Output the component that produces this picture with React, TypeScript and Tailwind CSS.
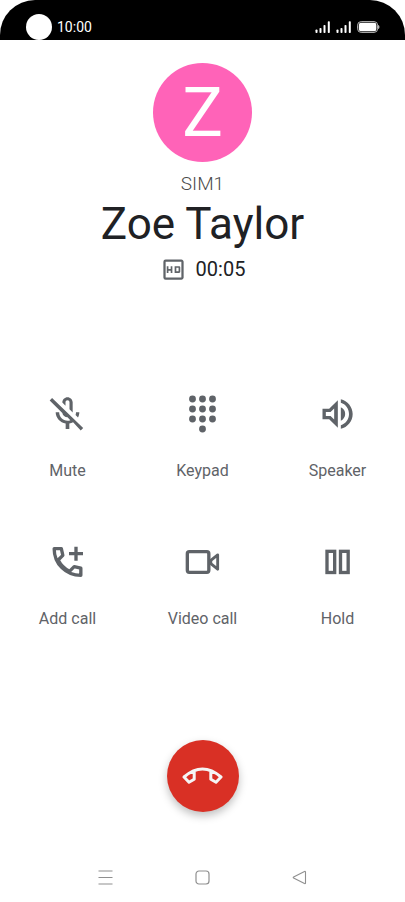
import React from 'react';
import { MdOutlineHd } from 'react-icons/md';

const SignalIcon: React.FC = () => (
  <svg className="w-4 h-3" viewBox="0 0 16 12" fill="#fff" aria-hidden="true">
    <rect x="0.5" y="8.5" width="2" height="3.5" rx="0.8" />
    <rect x="4.5" y="7" width="2" height="5" rx="0.8" />
    <rect x="8.5" y="4" width="2" height="8" rx="0.8" />
    <rect x="12.8" y="0.3" width="2" height="11.7" rx="0.8" />
  </svg>
);

const BatteryIcon: React.FC = () => (
  <svg className="w-[23px] h-3" viewBox="0 0 23 12" aria-hidden="true">
    <rect x="0.6" y="0.6" width="20" height="10.8" rx="3.6" fill="none" stroke="#bbb" strokeWidth="1" />
    <rect x="1.8" y="1.8" width="17.6" height="8.4" rx="2.2" fill="#fff" />
    <path d="M21.2 4c.9.3 1.2 1.1 1.2 2s-.3 1.7-1.2 2z" fill="#ddd" />
  </svg>
);

const MuteIcon: React.FC = () => (
  <svg className="w-[41px] h-10" viewBox="0 0 24 24" fill="currentColor" aria-hidden="true">
    <path d="M10.8 5c0-.7.5-1.2 1.2-1.2s1.2.5 1.2 1.2v4.2l1.9 1.9V5c0-1.7-1.4-3.1-3.1-3.1S8.9 3.3 8.9 5v.1l1.9 1.9V5zM19.1 11h-2c0 .58-.1 1.13-.27 1.64l1.47 1.47c.5-.88.8-2.07.8-3.11z" />
    <path d="M2.75 2.4 1.3 3.85 8.9 11.4c.2 1.5 1.6 2.6 3.1 2.6l1.7 1.7c-.55.2-1.1.3-1.7.3-2.76 0-5-2.2-5-5H4.9c0 3.41 2.72 6.23 6 6.72V21h2.2v-3.28c.8-.12 1.55-.36 2.25-.72l4.6 4.9 1.45-1.45z" />
  </svg>
);

const KeypadIcon: React.FC = () => (
  <svg className="w-[41px] h-10" viewBox="0 0 24 24" fill="currentColor" aria-hidden="true">
    {[3, 9, 15].map((y) =>
      [6, 12, 18].map((x) => <circle key={`${x}-${y}`} cx={x} cy={y} r="2.05" />)
    )}
    <circle cx="12" cy="21" r="2.05" />
  </svg>
);

const SpeakerIcon: React.FC = () => (
  <svg className="w-[41px] h-10" viewBox="0 0 24 24" fill="currentColor" aria-hidden="true">
    <path d="M3 8.8v6.4h4l5.2 5V3.8L7 8.8H3zm7-.17v6.74L7.83 13.2H5v-2.4h2.83L10 8.63z" />
    <path d="M16.6 12A4.5 4.5 0 0 0 14 7.9v8.2c1.48-.73 2.6-2.3 2.6-4.1z" />
    <path d="M14 3.1v2.19c2.89.86 4.9 3.54 4.9 6.71s-2.01 5.85-4.9 6.71v2.19c4.01-.91 7.1-4.6 7.1-8.9s-3.09-7.99-7.1-8.9z" />
  </svg>
);

const AddCallIcon: React.FC = () => (
  <svg className="w-[41px] h-10" viewBox="0 0 24 24" fill="none" stroke="currentColor" strokeWidth="2" strokeLinejoin="round" aria-hidden="true">
    <path d="M20 20C11 20 4 13 4 4h4.3l.9 4-2.8 2.8a15.5 15.5 0 0 0 6.8 6.8L16 14.8l4 .9z" />
    <path d="M17.1 2.8v8.4M12.9 7h8.4" />
  </svg>
);

const VideoIcon: React.FC = () => (
  <svg className="w-[41px] h-10" viewBox="0 0 24 24" fill="none" stroke="currentColor" strokeWidth="2" aria-hidden="true">
    <rect x="2.9" y="5.8" width="12.9" height="12.4" rx="1.2" />
    <path d="M21.1 7.7 17 11v2l4.1 3.3z" strokeWidth="1.7" strokeLinejoin="round" />
  </svg>
);

const HoldIcon: React.FC = () => (
  <svg className="w-[41px] h-10" viewBox="0 0 24 24" fill="none" stroke="currentColor" strokeWidth="2" aria-hidden="true">
    <rect x="5.7" y="5.6" width="4.6" height="12.7" />
    <rect x="13.8" y="5.6" width="4.6" height="12.7" />
  </svg>
);

const actions = [
  { label: 'Mute', Icon: MuteIcon },
  { label: 'Keypad', Icon: KeypadIcon },
  { label: 'Speaker', Icon: SpeakerIcon },
  { label: 'Add call', Icon: AddCallIcon },
  { label: 'Video call', Icon: VideoIcon },
  { label: 'Hold', Icon: HoldIcon },
];

const App: React.FC = () => {
  return (
    <div className="min-h-screen flex flex-col bg-white font-[Roboto,sans-serif]">
      <header className="h-10 shrink-0 bg-black rounded-t-[35px] flex items-end justify-between pl-[26px] pr-[25px]">
        <div className="flex items-center gap-[5px]">
          <div className="w-[26px] h-[26px] rounded-full bg-white" />
          <span className="text-sm text-white">10:00</span>
        </div>
        <div className="flex items-center gap-[5px] pb-[7px]">
          <SignalIcon />
          <SignalIcon />
          <BatteryIcon />
        </div>
      </header>

      <main className="flex-1 flex flex-col items-center pt-[23px]">
        <div className="w-[99px] h-[99px] rounded-full bg-[#ff63b8] text-white text-[68px] flex items-center justify-center">
          Z
        </div>
        <p className="mt-2 text-[19px] leading-7 font-light text-[#4a4a4a]">SIM1</p>
        <h1 className="text-[44px] leading-[52px] text-[#202124]">Zoe Taylor</h1>
        <div className="mt-[5px] h-7 flex items-center gap-[9px]">
          <MdOutlineHd className="w-[27px] h-[27px] text-[#5f6368]" aria-label="HD" />
          <span className="text-xl text-[#202124]">00:05</span>
        </div>

        <div className="mt-[111px] w-full grid grid-cols-3 gap-y-[59px]">
          {actions.map(({ label, Icon }) => (
            <button key={label} type="button" className="flex flex-col items-center gap-[25px] text-[#5f6368]">
              <Icon />
              <span className="text-base leading-6">{label}</span>
            </button>
          ))}
        </div>

        <button
          type="button"
          aria-label="End call"
          className="mt-[109px] w-[72px] h-[72px] rounded-full bg-[#d93025] shadow-[0_4px_8px_rgba(0,0,0,0.25)] flex items-center justify-center"
        >
          <svg className="w-[41px] h-[18px]" viewBox="0 0 41 18" fill="none" stroke="#f5f5f5" strokeWidth="3" strokeLinejoin="round" aria-hidden="true">
            <path d="M12.2 3.5v8.8L7 15.3 2 10Q20.5-6 39 10l-5 5.3-5.2-3V3.5" />
          </svg>
        </button>
      </main>

      <nav className="mt-10 h-[50px] grid grid-cols-3 px-[57px] text-[#8f8f8f]">
        <button type="button" aria-label="Recent apps" className="flex items-center justify-center">
          <svg className="w-[15px] h-[15px]" viewBox="0 0 15 15" fill="none" stroke="currentColor" strokeWidth="1.1">
            <path d="M.5 1h14M.5 7.5h14M.5 14h14" />
          </svg>
        </button>
        <button type="button" aria-label="Home" className="flex items-center justify-center">
          <svg className="w-[15px] h-[15px]" viewBox="0 0 15 15" fill="none" stroke="currentColor" strokeWidth="1.2">
            <rect x="1" y="1" width="13" height="13" rx="3" />
          </svg>
        </button>
        <button type="button" aria-label="Back" className="flex items-center justify-center">
          <svg className="w-[15px] h-[15px]" viewBox="0 0 15 15" fill="none" stroke="currentColor" strokeWidth="1.1" strokeLinejoin="round">
            <path d="M13.5 2v11q0 1-1 .6L1.6 8Q.8 7.5 1.6 7L12.5 1.4q1-.4 1 .6z" />
          </svg>
        </button>
      </nav>
    </div>
  );
};

export default App;
